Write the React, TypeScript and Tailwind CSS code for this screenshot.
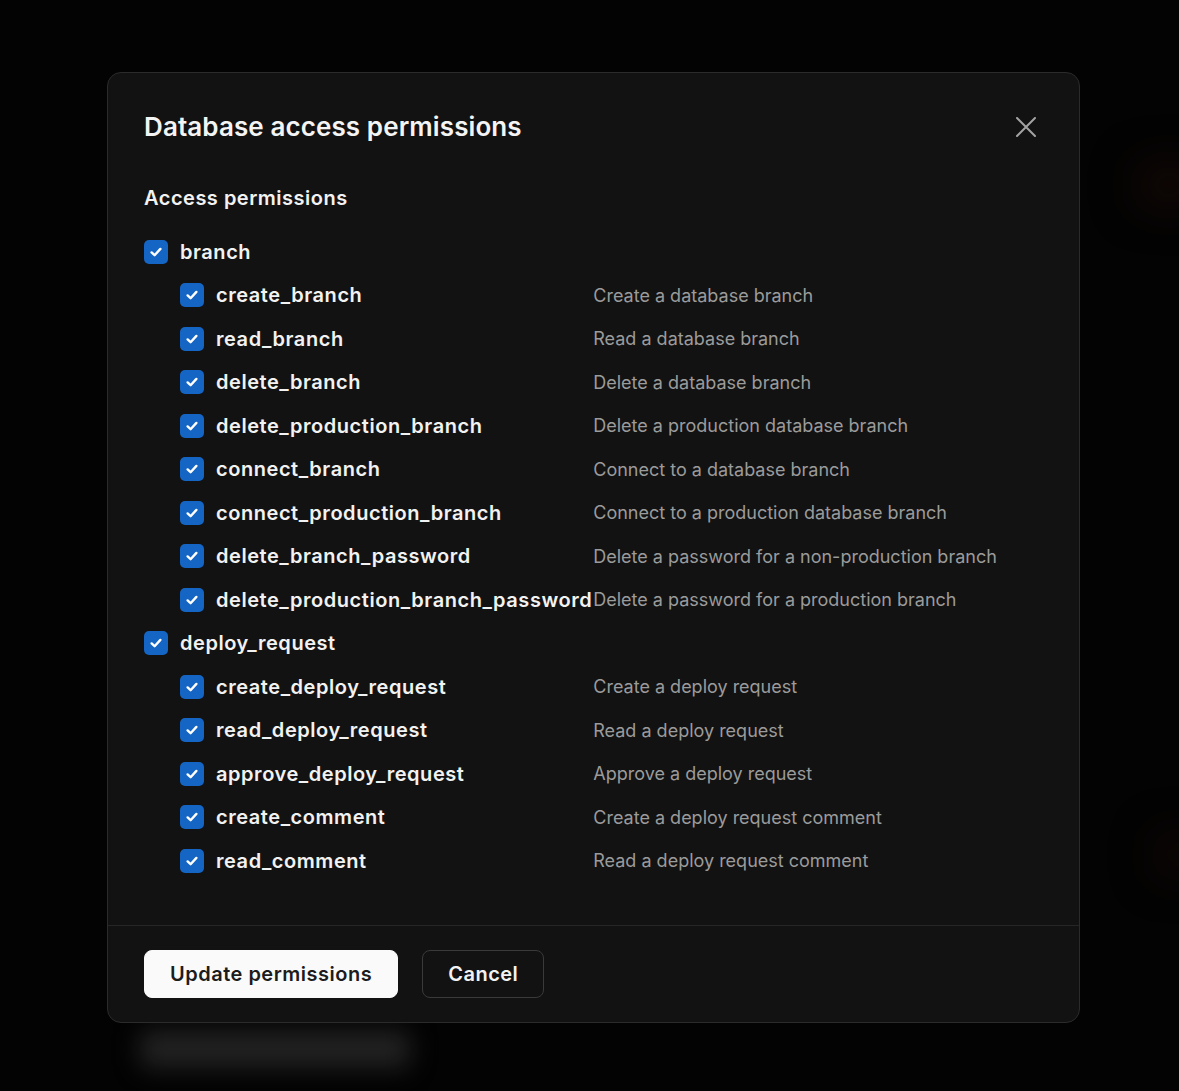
type Perm = { name: string; desc: string };

const groups: { name: string; perms: Perm[] }[] = [
  {
    name: "branch",
    perms: [
      { name: "create_branch", desc: "Create a database branch" },
      { name: "read_branch", desc: "Read a database branch" },
      { name: "delete_branch", desc: "Delete a database branch" },
      { name: "delete_production_branch", desc: "Delete a production database branch" },
      { name: "connect_branch", desc: "Connect to a database branch" },
      { name: "connect_production_branch", desc: "Connect to a production database branch" },
      { name: "delete_branch_password", desc: "Delete a password for a non-production branch" },
      { name: "delete_production_branch_password", desc: "Delete a password for a production branch" },
    ],
  },
  {
    name: "deploy_request",
    perms: [
      { name: "create_deploy_request", desc: "Create a deploy request" },
      { name: "read_deploy_request", desc: "Read a deploy request" },
      { name: "approve_deploy_request", desc: "Approve a deploy request" },
      { name: "create_comment", desc: "Create a deploy request comment" },
      { name: "read_comment", desc: "Read a deploy request comment" },
    ],
  },
];

function Check() {
  return (
    <span className="flex h-6 w-6 shrink-0 items-center justify-center rounded-[5px] bg-[#1565c4]">
      <svg width="14" height="14" viewBox="0 0 14 14" fill="none">
        <path
          d="M2.6 7.4 5.6 10.2 11.4 3.9"
          stroke="white"
          strokeWidth="2.4"
          strokeLinecap="round"
          strokeLinejoin="round"
        />
      </svg>
    </span>
  );
}

export default function App() {
  return (
    <div className="relative h-screen overflow-hidden bg-[#030303] pl-[107px] pt-[72px] font-['Inter',sans-serif]">
      {/* blurred stuff behind the dialog */}
      <div className="absolute left-[140px] top-[1030px] h-[38px] w-[270px] rounded-lg bg-[#222] blur-md" />
      <div className="absolute right-[-20px] top-[170px] h-[30px] w-[60px] rounded-full bg-[#1e0b06] blur-xl" />
      <div className="absolute right-[-20px] top-[840px] h-[30px] w-[40px] rounded-full bg-[#1e0b06] blur-xl" />

      <div className="relative w-[973px] rounded-[14px] border border-[#2b2b2b] bg-[#121212]">
        {/* header */}
        <div className="flex items-center justify-between px-[36px] pt-[34px]">
          <h2 className="text-[26px] font-semibold leading-8 tracking-[0.1px] text-[#f4f4f4]">
            Database access permissions
          </h2>
          <button className="-mr-[3px] flex h-10 w-10 items-center justify-center text-[#a3a3a3]">
            <svg width="20" height="20" viewBox="0 0 20 20" fill="none">
              <path d="M1 1 19 19M19 1 1 19" stroke="currentColor" strokeWidth="2" strokeLinecap="round" />
            </svg>
          </button>
        </div>

        {/* body */}
        <div className="px-[36px] pb-[42px] pt-[37px]">
          <h3 className="text-[20px] font-semibold leading-7 tracking-[0.5px] text-[#f2f2f2]">
            Access permissions
          </h3>
          <div className="mt-[18px] grid grid-cols-[auto_1fr]">
            {groups.map((g) => (
              <div key={g.name} className="contents">
                <div className="col-span-2 flex h-[43.5px] items-center gap-3">
                  <Check />
                  <span className="text-[20px] font-semibold tracking-[0.55px] text-[#f2f2f2]">{g.name}</span>
                </div>
                {g.perms.map((p) => (
                  <div key={p.name} className="contents">
                    <div className="flex h-[43.5px] items-center gap-3 pl-9">
                      <Check />
                      <span className="whitespace-nowrap text-[20px] font-semibold tracking-[0.55px] text-[#f2f2f2]">
                        {p.name}
                      </span>
                    </div>
                    <div className="flex h-[43.5px] items-center whitespace-nowrap pl-[1px] text-[18px] text-[#9b9b9b]">
                      {p.desc}
                    </div>
                  </div>
                ))}
              </div>
            ))}
          </div>
        </div>

        {/* footer */}
        <div className="flex gap-6 border-t border-[#262626] px-[36px] py-6">
          <button className="h-12 rounded-lg border border-[#fafafa] bg-[#fafafa] px-[25px] text-[20px] font-semibold tracking-[0.5px] text-[#1c1c1c]">
            Update permissions
          </button>
          <button className="h-12 rounded-lg border border-[#3a3a3a] bg-[#121212] px-[25px] text-[20px] font-semibold tracking-[0.5px] text-[#f2f2f2]">
            Cancel
          </button>
        </div>
      </div>
    </div>
  );
}
